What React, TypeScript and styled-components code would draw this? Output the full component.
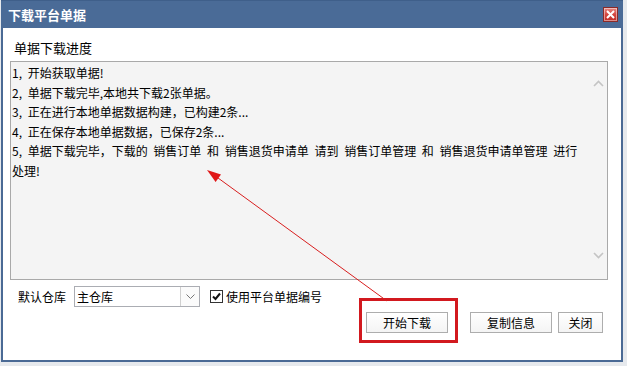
import React from "react";
import styled, { createGlobalStyle } from "styled-components";

const GlobalStyle = createGlobalStyle`
  html, body { margin: 0; padding: 0; }
  body {
    background: #e6e9ed;
    font-family: "Noto Sans CJK SC", "Noto Sans", sans-serif;
    color: #000;
  }
`;

const Page = styled.div`
  position: relative;
  width: 627px;
  height: 366px;
  overflow: hidden;
  padding-left: 1px;
  box-sizing: border-box;
`;

const Window = styled.div`
  width: 622px;
  height: 362px;
  display: flex;
  flex-direction: column;
  background: #ffffff;
`;

const TitleBar = styled.div`
  height: 28px;
  flex: none;
  background: #4a6b97;
  border-top: 1px solid #3f5f8a;
  box-sizing: border-box;
  display: flex;
  align-items: center;
  justify-content: space-between;
  padding: 0 5px 0 7px;
`;

const Title = styled.span`
  color: #ffffff;
  font-size: 13px;
  font-weight: 700;
  line-height: 26px;
  letter-spacing: 0;
`;

const CloseButton = styled.button`
  width: 15px;
  height: 15px;
  padding: 0;
  margin: 0;
  border: 1px solid #8a2a28;
  background: linear-gradient(#e88a84 0%, #d4463f 50%, #c12c26 100%);
  box-shadow: inset 0 0 0 1px rgba(255, 255, 255, 0.45);
  display: flex;
  align-items: center;
  justify-content: center;
  box-sizing: border-box;
  margin-top: 0px;
`;

const Body = styled.div`
  flex: 1;
  display: flex;
  flex-direction: column;
  border: 2px solid #4a6a95;
  border-top: none;
  padding: 10px 13px 0 7px;
  box-sizing: border-box;
`;

const SectionLabel = styled.div`
  font-size: 13px;
  line-height: 20px;
  height: 20px;
  padding-left: 4px;
  margin-bottom: 3px;
`;

const LogBox = styled.div`
  height: 219px;
  flex: none;
  border: 1px solid #a9a9a9;
  background: #f4f4f4;
  box-sizing: border-box;
  display: flex;
`;

const LogText = styled.div`
  flex: 1;
  padding: 1px 0 0 1px;
  font-size: 12px;
  line-height: 19.5px;
  word-spacing: 3px;
  white-space: nowrap;
`;

const ScrollTrack = styled.div`
  width: 17px;
  flex: none;
  display: flex;
  flex-direction: column;
  justify-content: space-between;
  align-items: center;
  padding: 18px 0 20px;
  box-sizing: border-box;
`;

const OptionsRow = styled.div`
  margin-top: 6px;
  height: 21px;
  display: flex;
  align-items: center;
  padding-left: 8px;
  font-size: 12px;
`;

const FieldLabel = styled.span`
  margin-right: 8px;
  line-height: 21px;
`;

const Combo = styled.div`
  width: 126px;
  height: 21px;
  border: 1px solid #abadb3;
  box-sizing: border-box;
  display: flex;
  background: #fff;
  margin-right: 10px;
`;

const ComboValue = styled.span`
  flex: 1;
  padding-left: 2px;
  line-height: 19px;
`;

const ComboButton = styled.span`
  width: 18px;
  border-left: 1px solid #d0d0d0;
  display: flex;
  align-items: center;
  justify-content: center;
  background: #fbfbfb;
`;

const CheckLabel = styled.label`
  display: flex;
  align-items: center;
  gap: 3px;
  line-height: 21px;
`;

const CheckBox = styled.span`
  width: 13px;
  height: 13px;
  border: 1px solid #333;
  box-sizing: border-box;
  background: #fff;
  display: flex;
  align-items: center;
  justify-content: center;
`;

const ButtonRow = styled.div`
  margin-top: 5px;
  display: flex;
  justify-content: flex-end;
  padding-right: 5px;
`;

const Button = styled.button<{ $width: number; $gap?: number }>`
  width: ${(p) => p.$width}px;
  height: 21px;
  margin-left: ${(p) => p.$gap ?? 0}px;
  border: 1px solid #adadad;
  background: linear-gradient(#ffffff, #f4f4f4);
  font-family: inherit;
  font-size: 12px;
  line-height: 19px;
  padding: 0;
  color: #000;
`;

const Highlight = styled.div`
  position: absolute;
  left: 359px;
  top: 298px;
  width: 99px;
  height: 45px;
  border: 3px solid #d2191f;
  box-sizing: border-box;
  pointer-events: none;
`;

const ArrowLayer = styled.svg`
  position: absolute;
  left: 0;
  top: 0;
  width: 627px;
  height: 366px;
  pointer-events: none;
`;

const Chevron = ({ up }: { up?: boolean }) => (
  <svg width="11" height="7" viewBox="0 0 11 7">
    <path
      d={up ? "M1 6 L5.5 1.5 L10 6" : "M1 1 L5.5 5.5 L10 1"}
      fill="none"
      stroke="#c4c4c4"
      strokeWidth="1.6"
    />
  </svg>
);

export default function App() {
  return (
    <>
      <GlobalStyle />
      <Page>
        <Window>
          <TitleBar>
            <Title>下载平台单据</Title>
            <CloseButton aria-label="关闭">
              <svg width="9" height="9" viewBox="0 0 9 9">
                <path d="M1 1 L8 8 M8 1 L1 8" stroke="#fff" strokeWidth="2" />
              </svg>
            </CloseButton>
          </TitleBar>
          <Body>
            <SectionLabel>单据下载进度</SectionLabel>
            <LogBox>
              <LogText>
                <div>1, 开始获取单据!</div>
                <div>2, 单据下载完毕,本地共下载2张单据。</div>
                <div>3, 正在进行本地单据数据构建，已构建2条...</div>
                <div>4, 正在保存本地单据数据，已保存2条...</div>
                <div>
                  5, 单据下载完毕，下载的 销售订单 和 销售退货申请单 请到 销售订单管理 和 销售退货申请单管理 进行
                  <br />
                  处理!
                </div>
              </LogText>
              <ScrollTrack>
                <Chevron up />
                <Chevron />
              </ScrollTrack>
            </LogBox>
            <OptionsRow>
              <FieldLabel>默认仓库</FieldLabel>
              <Combo>
                <ComboValue>主仓库</ComboValue>
                <ComboButton>
                  <svg width="9" height="5" viewBox="0 0 9 5">
                    <path d="M0.5 0.5 L4.5 4.5 L8.5 0.5" fill="none" stroke="#777" strokeWidth="1" />
                  </svg>
                </ComboButton>
              </Combo>
              <CheckLabel>
                <CheckBox>
                  <svg width="9" height="9" viewBox="0 0 9 9">
                    <path d="M1 4.5 L3.5 7 L8 1.5" fill="none" stroke="#111" strokeWidth="2" />
                  </svg>
                </CheckBox>
                使用平台单据编号
              </CheckLabel>
            </OptionsRow>
            <ButtonRow>
              <Button $width={82}>开始下载</Button>
              <Button $width={82} $gap={22}>复制信息</Button>
              <Button $width={45} $gap={6}>关闭</Button>
            </ButtonRow>
          </Body>
        </Window>
        <Highlight />
        <ArrowLayer viewBox="0 0 627 366">
          <line x1="387" y1="301" x2="216" y2="176.5" stroke="#d81e1e" strokeWidth="1" />
          <polygon points="207,170 221,174.6 215.6,182" fill="#e01818" />
        </ArrowLayer>
      </Page>
    </>
  );
}
